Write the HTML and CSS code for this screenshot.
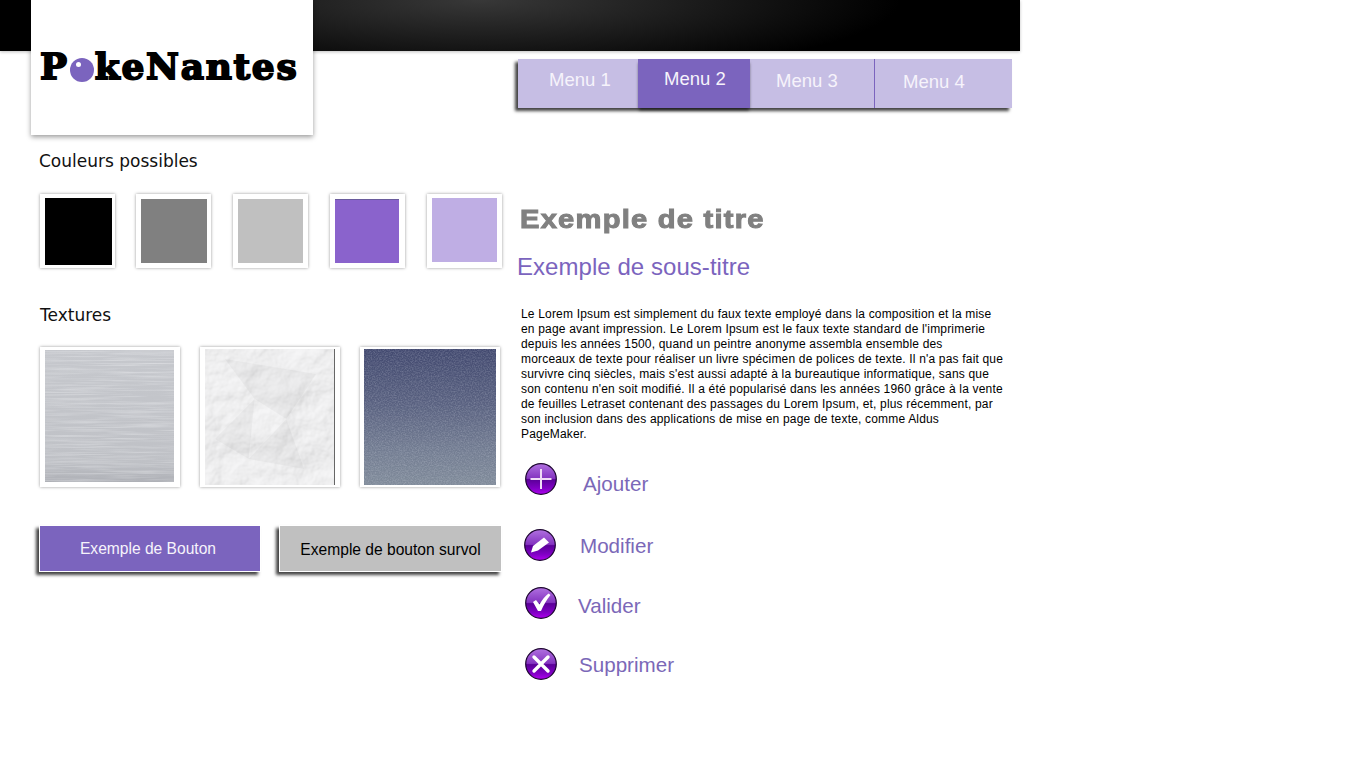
FILE: index.html
```html
<!DOCTYPE html>
<html lang="fr">
<head>
<meta charset="utf-8">
<title>PokeNantes</title>
<link rel="stylesheet" href="styles.css">
</head>
<body>
<svg class="defs" width="0" height="0" aria-hidden="true">
  <defs>
    <linearGradient id="gloss" x1="0" y1="0" x2="0" y2="1">
      <stop offset="0" stop-color="#b070e0"/>
      <stop offset=".48" stop-color="#8434c0"/>
      <stop offset=".52" stop-color="#5a0098"/>
      <stop offset=".8" stop-color="#8000c4"/>
      <stop offset="1" stop-color="#b000f0"/>
    </linearGradient>
    <linearGradient id="denim" x1="0" y1="0" x2="0" y2="1">
      <stop offset="0" stop-color="#434a70"/>
      <stop offset=".4" stop-color="#596180"/>
      <stop offset=".75" stop-color="#737d92"/>
      <stop offset="1" stop-color="#808b9a"/>
    </linearGradient>
    <linearGradient id="metal" x1="0" y1="0" x2="0" y2="1">
      <stop offset="0" stop-color="#c6c8cd"/>
      <stop offset=".85" stop-color="#bfc1c6"/>
      <stop offset="1" stop-color="#aeb0b6"/>
    </linearGradient>
    <filter id="brushed" x="0" y="0" width="100%" height="100%">
      <feTurbulence type="fractalNoise" baseFrequency=".015 .6" numOctaves="3" seed="9"/>
      <feColorMatrix type="matrix" values="0 0 0 0 .92  0 0 0 0 .93  0 0 0 0 .95  2 0 0 0 -.8"/>
    </filter>
    <filter id="paper" x="0" y="0" width="100%" height="100%">
      <feTurbulence type="fractalNoise" baseFrequency=".02" numOctaves="5" seed="5" result="n"/>
      <feDiffuseLighting in="n" surfaceScale="4" diffuseConstant="1" lighting-color="#f6f6f7">
        <feDistantLight azimuth="230" elevation="68"/>
      </feDiffuseLighting>
    </filter>
    <filter id="weave" x="0" y="0" width="100%" height="100%">
      <feTurbulence type="fractalNoise" baseFrequency=".7 .8" numOctaves="2" seed="7"/>
      <feColorMatrix type="matrix" values="0 0 0 0 .80  0 0 0 0 .83  0 0 0 0 .90  1.800 0 0 0 -.65"/>
    </filter>
  </defs>
</svg>

<div class="page">
  <header class="topbar"></header>
  <div class="logo"><span class="logo-text">P<span class="logo-o">o</span>keNantes</span></div>

  <main class="columns">
    <section class="left">
      <h2 class="label label-colors">Couleurs possibles</h2>
      <div class="swatches">
        <div class="frame"><div class="sw sw-black"></div></div>
        <div class="frame"><div class="sw sw-gray"></div></div>
        <div class="frame"><div class="sw sw-silver"></div></div>
        <div class="frame"><div class="sw sw-purple"></div></div>
        <div class="frame"><div class="sw sw-lilac"></div></div>
      </div>

      <h2 class="label label-textures">Textures</h2>
      <div class="textures">
        <div class="tex-frame">
          <svg class="tex tex-a" viewBox="0 0 129 132" preserveAspectRatio="none"><rect width="129" height="132" fill="url(#metal)"/><rect width="129" height="132" filter="url(#brushed)" opacity=".4"/></svg>
        </div>
        <div class="tex-frame">
          <svg class="tex tex-b" viewBox="0 0 130 136" preserveAspectRatio="none"><rect width="130" height="136" filter="url(#paper)"/><path d="M20 10l30 40 32 20 30-45zM10 90l40-40-6 60zM82 70l18 50-56-10z" fill="#000" fill-opacity=".03"/></svg>
        </div>
        <div class="tex-frame">
          <svg class="tex tex-c" viewBox="0 0 132 136" preserveAspectRatio="none"><rect width="132" height="136" fill="url(#denim)"/><rect width="132" height="136" filter="url(#weave)" opacity=".25"/></svg>
        </div>
      </div>

      <div class="buttons">
        <a class="btn btn-main">Exemple de Bouton</a>
        <a class="btn btn-hover">Exemple de bouton survol</a>
      </div>
    </section>

    <section class="right">
      <nav class="menu">
        <a class="item item-1">Menu 1</a>
        <a class="item item-2">Menu 2</a>
        <a class="item item-3">Menu 3</a>
        <a class="item item-4">Menu 4</a>
      </nav>

      <h1 class="title">Exemple de titre</h1>
      <h2 class="subtitle">Exemple de sous-titre</h2>

      <p class="lorem">Le Lorem Ipsum est simplement du faux texte employé dans la composition et la mise<br>en page avant impression. Le Lorem Ipsum est le faux texte standard de l'imprimerie<br>depuis les années 1500, quand un peintre anonyme assembla ensemble des<br>morceaux de texte pour réaliser un livre spécimen de polices de texte. Il n'a pas fait que<br>survivre cinq siècles, mais s'est aussi adapté à la bureautique informatique, sans que<br>son contenu n'en soit modifié. Il a été popularisé dans les années 1960 grâce à la vente<br>de feuilles Letraset contenant des passages du Lorem Ipsum, et, plus récemment, par<br>son inclusion dans des applications de mise en page de texte, comme Aldus<br>PageMaker.</p>

      <ul class="actions">
        <li class="action action-add">
          <svg class="icon" viewBox="0 0 32 32"><circle cx="16" cy="16" r="15.3" fill="url(#gloss)" stroke="#1c0430" stroke-width="1.2"/><path d="M16 6v20M5.500 16h21" stroke="#f0dcf6" stroke-width="2" fill="none"/></svg>
          <span class="action-label">Ajouter</span>
        </li>
        <li class="action action-edit">
          <svg class="icon" viewBox="0 0 32 32"><circle cx="16" cy="16" r="15.300" fill="url(#gloss)" stroke="#1c0430" stroke-width="1.200"/><path d="M7 23.500l2-6.500L20 8.500l5 5-11 8z" fill="#fff"/></svg>
          <span class="action-label">Modifier</span>
        </li>
        <li class="action action-ok">
          <svg class="icon" viewBox="0 0 32 32"><circle cx="16" cy="16" r="15.300" fill="url(#gloss)" stroke="#1c0430" stroke-width="1.200"/><path d="M8 15l3-2 3.500 4.500C17 13 20 9 23.500 6.500l2 1.500C21.500 13 18.500 18 16 24h-3z" fill="#fff"/></svg>
          <span class="action-label">Valider</span>
        </li>
        <li class="action action-del">
          <svg class="icon" viewBox="0 0 32 32"><circle cx="16" cy="16" r="15.300" fill="url(#gloss)" stroke="#1c0430" stroke-width="1.200"/><path d="M9 9l14 14M23 9L9 23" stroke="#fff" stroke-width="3.400" stroke-linecap="round" fill="none"/></svg>
          <span class="action-label">Supprimer</span>
        </li>
      </ul>
    </section>
  </main>
</div>
</body>
</html>
```

FILE: styles.css
```css
* { box-sizing: border-box; }
html, body { margin: 0; padding: 0; background: #fff; }
body { font-family: "Liberation Sans", Arial, sans-serif; color: #000; height: 768px; overflow: hidden; }
.defs { position: absolute; }
.page { width: 1020px; position: relative; }

.topbar {
  height: 51px;
  background: radial-gradient(ellipse 420px 78px at 480px 0, #383838 0%, #000 100%);
  box-shadow: 0 1px 3px rgba(0,0,0,.25);
}

.logo {
  position: absolute;
  left: 31px;
  top: 0;
  width: 282px;
  height: 135px;
  background: #fff;
  box-shadow: 0 2px 5px rgba(0,0,0,.4);
  padding: 43px 0 0 9px;
}
.logo-text {
  font-family: "DejaVu Serif", serif;
  font-weight: 700;
  font-size: 36px;
  line-height: 46px;
  letter-spacing: 1.7px;
  -webkit-text-stroke: 1.8px #000;
  white-space: nowrap;
  display: block;
}
.logo-o {
  display: inline-block;
  width: 24px;
  height: 24px;
  margin: 0 1px;
  line-height: 22px;
  text-align: center;
  font-size: 24px;
  letter-spacing: 0;
  color: #7b64be;
  -webkit-text-stroke: 0;
  background: #7b64be;
  border-radius: 50%;
  position: relative;
  vertical-align: 2px;
}
.logo-o::after {
  content: "";
  position: absolute;
  left: 6px;
  top: 4px;
  width: 5px;
  height: 5px;
  border-radius: 50%;
  background: #fff;
}

.columns { display: flex; align-items: flex-start; }

.left { width: 517px; padding-left: 40px; flex: none; }
.label {
  margin: 0;
  font-family: "DejaVu Sans", Verdana, sans-serif;
  font-weight: 400;
  font-size: 17px;
  line-height: 20px;
  color: #111;
}
.label-colors { margin: 100px 0 0 -1px; }
.label-textures { margin-top: 37px; }

.swatches {
  display: grid;
  grid-template-columns: 96px 97px 97px 97px 75px;
  margin-top: 23px;
}
.frame {
  width: 75px;
  height: 74px;
  background: #fff;
  box-shadow: 0 0 3px rgba(0,0,0,.4);
  display: flex;
  align-items: center;
  justify-content: center;
}
.sw { width: 65px; height: 64px; }
.sw-black { background: #000; width: 67px; height: 67px; margin: 1px 0 0 1px; }
.sw-gray { background: #808080; width: 66px; }
.sw-silver { background: #c0c0c0; }
.sw-purple { background: #8a63cc; width: 64px; margin-right: 1px; box-shadow: inset 0 1px #6a5c9c; }
.sw-lilac { background: #bfaee4; margin-bottom: 2px; }

.textures {
  display: flex;
  gap: 20px;
  margin-top: 22px;
}
.tex-frame {
  width: 140px;
  height: 140px;
  background: #fff;
  box-shadow: 0 0 3px rgba(0,0,0,.4);
  display: flex;
  align-items: center;
  justify-content: center;
}
.tex { display: block; }
.tex-a { width: 129px; height: 132px; margin: 0 2px 2px 0; }
.tex-b { width: 130px; height: 136px; border-right: 1px solid #666; }
.tex-c { width: 132px; height: 136px; }

.buttons { display: flex; gap: 20px; margin-top: 39px; }
.btn {
  width: 220px;
  height: 45px;
  display: flex;
  align-items: center;
  justify-content: center;
  font-size: 15.6px;
  box-shadow: 0 0 0 1px #fff, -3px 3px 3px 1px #444;
}
.btn-main { background: #7b64be; color: #f6f3fb; padding: 0 4px 0 0; }
.btn-hover { background: #c0c0c0; color: #000; width: 221px; padding: 2px 0 0 0; }

.right { flex: none; width: 503px; padding-top: 8px; }
.menu {
  display: flex;
  height: 49px;
  margin-left: 1px;
  width: 494px;
  background: #c6bee4;
  box-shadow: -3px 3px 3px #444;
}
.item {
  height: 49px;
  color: #f6f3fb;
  font-size: 18.5px;
  display: flex;
  align-items: center;
  white-space: nowrap;
}
.item-1 { width: 120px; padding: 0 0 7px 31px; }
.item-2 { width: 112px; padding: 0 0 9px 26px; background: #7b64be; box-shadow: 0 3px 3px -1px #222; }
.item-3 { width: 125px; padding: 0 0 5px 26px; border-right: 1px solid #7b64be; }
.item-4 { width: 137px; padding: 0 0 3px 28px; }

.title {
  margin: 95px 0 0 3px;
  color: #808080;
  font-size: 26px;
  line-height: 32px;
  font-weight: 700;
  letter-spacing: 1.1px;
  -webkit-text-stroke: 1px #808080;
  transform: scaleX(1.12);
  transform-origin: left center;
  white-space: nowrap;
}
.subtitle {
  margin: 18px 0 0;
  color: #7b64be;
  font-size: 24px;
  line-height: 28px;
  font-weight: 400;
  letter-spacing: .05px;
}
.lorem {
  margin: 26px 0 0 4px;
  font-size: 12px;
  line-height: 15px;
  letter-spacing: .18px;
  white-space: nowrap;
}

.actions { list-style: none; margin: 21px 0 0 8px; padding: 0; }
.action {
  display: flex;
  align-items: flex-start;
  height: 32px;
  color: #7b68b8;
  font-size: 20.6px;
}
.icon { width: 32px; height: 32px; display: block; flex: none; }
.action-label { line-height: 24px; }
.action-add .action-label { margin: 9px 0 0 26px; }
.action-edit { margin: 34px 0 0 -1px; }
.action-edit .action-label { margin: 5px 0 0 24px; }
.action-ok { margin-top: 26px; }
.action-ok .action-label { margin: 7px 0 0 21px; }
.action-del { margin-top: 29px; }
.action-del .action-label { margin: 5px 0 0 22px; }
```
